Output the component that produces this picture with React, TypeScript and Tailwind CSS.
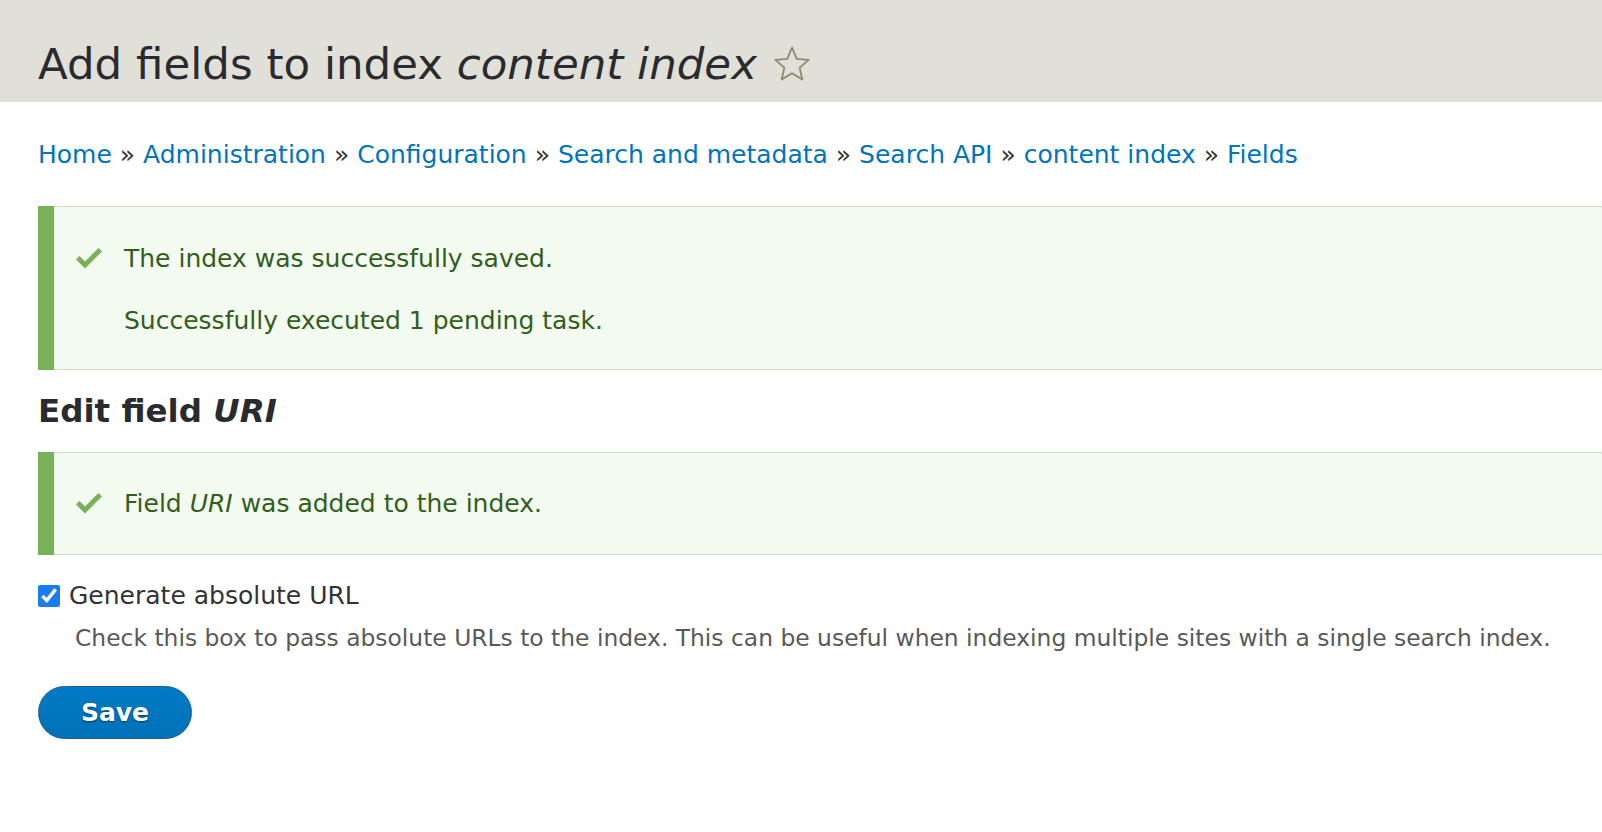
import React from 'react';

const crumbs = ['Home', 'Administration', 'Configuration', 'Search and metadata', 'Search API', 'content index', 'Fields'];

const Check: React.FC = () => (
  <svg width="30" height="24" viewBox="0 0 30 24" className="shrink-0">
    <path d="M2 12.5 L5.5 9 L11 14.5 L24.5 1 L28 4.5 L11 21.5 Z" fill="#77b259" />
  </svg>
);

const Star: React.FC = () => (
  <svg width="40" height="40" viewBox="0 0 24 24" className="ml-[15px] mb-[2px]">
    <path
      d="M12 2.2 L14.9 8.9 L22 9.5 L16.6 14.2 L18.2 21.3 L12 17.6 L5.8 21.3 L7.4 14.2 L2 9.5 L9.1 8.9 Z"
      fill="none"
      stroke="#8c8b72"
      strokeWidth="1.1"
      strokeLinejoin="round"
    />
  </svg>
);

const Message: React.FC<{ children: React.ReactNode; className?: string }> = ({ children, className }) => (
  <div
    className={`ml-[16px] rounded-r-[4px] border border-l-0 border-[#c9e1bd] bg-[#f3faef] text-[#325e1c] shadow-[-16px_0_0_#77b259] ${className ?? ''}`}
  >
    {children}
  </div>
);

export default function App() {
  return (
    <div className="min-h-screen bg-white font-['DejaVu_Sans',sans-serif] text-[#333]">
      <div className="flex h-[102px] items-end bg-[#e0e0d8] px-[38px] pb-[16px]">
        <h1 className="flex items-end text-[43.5px] leading-none text-[#2a2b2f]">
          <span>
            Add fields to index <em>content index</em>
          </span>
          <Star />
        </h1>
      </div>

      <div className="overflow-hidden pl-[38px]">
        <nav className="mt-[37px] text-[25px] leading-[32px]">
          {crumbs.map((c, i) => (
            <span key={c}>
              <a className="text-[#0074bd]">{c}</a>
              {i < crumbs.length - 1 && <span className="text-[#333]"> » </span>}
            </span>
          ))}
        </nav>

        <Message className="mt-[35px] -mr-[2px] flex h-[164px] flex-col justify-center gap-[24px] pl-[20px] pt-[3px] text-[25px]">
          <div className="flex items-center gap-[20px]">
            <Check />
            <span>The index was successfully saved.</span>
          </div>
          <div className="pl-[50px]">Successfully executed 1 pending task.</div>
        </Message>

        <h2 className="mt-[21px] text-[32.5px] font-bold leading-[40px] text-[#2a2b2f]">
          Edit field <em>URI</em>
        </h2>

        <Message className="mt-[21px] -mr-[2px] flex h-[103px] items-center gap-[20px] pl-[20px] text-[25px]">
          <Check />
          <span>
            Field <em>URI</em> was added to the index.
          </span>
        </Message>

        <div className="mt-[25px]">
          <label className="flex items-center gap-[9px] text-[25px] leading-[32px]">
            <input type="checkbox" defaultChecked className="h-[22px] w-[22px] accent-[#1a7cf3]" />
            <span>Generate absolute URL</span>
          </label>
          <p className="mt-[10px] pl-[37px] text-[23.4px] leading-[32px] text-[#595959]">
            Check this box to pass absolute URLs to the index. This can be useful when indexing multiple sites with a single search index.
          </p>
        </div>

        <div className="mt-[32px]">
          <button className="h-[53px] w-[154px] rounded-full border border-[#1e5c90] bg-gradient-to-b from-[#007bc6] to-[#0071b8] text-[25px] font-bold text-white [text-shadow:0_1px_2px_rgba(0,0,0,0.5)]">
            Save
          </button>
        </div>
      </div>
    </div>
  );
}
